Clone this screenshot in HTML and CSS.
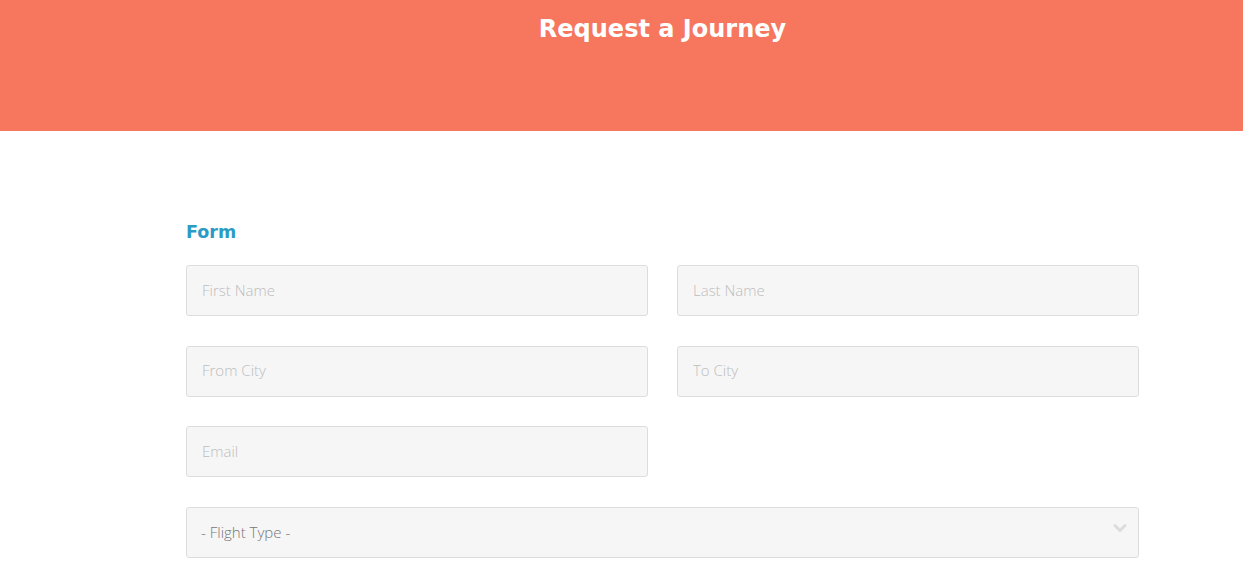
FILE: index.html
```html
<!DOCTYPE html>
<html lang="en">
<head>
<meta charset="utf-8">
<title>Request a Journey</title>
<link rel="stylesheet" href="styles.css">
</head>
<body>
<header class="hero">
  <div class="container">
    <h1 class="hero-title">Request a Journey</h1>
  </div>
</header>
<main class="content">
  <div class="container">
    <h2 class="form-title">Form</h2>
    <form class="form-grid">
      <input class="field" type="text" placeholder="First Name">
      <input class="field" type="text" placeholder="Last Name">
      <input class="field" type="text" placeholder="From City">
      <input class="field" type="text" placeholder="To City">
      <input class="field" type="email" placeholder="Email">
      <div class="spacer"></div>
      <div class="select-wrap">
        <select class="field select">
          <option>- Flight Type -</option>
        </select>
        <svg class="chevron" width="14" height="10" viewBox="0 0 14 10" aria-hidden="true">
          <path d="M2 2.5 L7 7.5 L12 2.5" fill="none" stroke="#dcdcdc" stroke-width="3" stroke-linecap="round" stroke-linejoin="round"/>
        </svg>
      </div>
    </form>
  </div>
</main>
</body>
</html>
```

FILE: styles.css
```css
html, body {
  margin: 0;
  padding: 0;
  background: #ffffff;
}

body {
  font-family: "Open Sans", "Liberation Sans", sans-serif;
}

.container {
  width: 953px;
  margin-left: 186px;
}

.hero {
  background: #f6765e;
  height: 131px;
  box-sizing: border-box;
  padding-top: 11px;
}

.hero-title {
  margin: 0;
  text-align: center;
  color: #ffffff;
  font-family: "DejaVu Sans", "Liberation Sans", sans-serif;
  font-weight: 700;
  font-size: 24px;
  line-height: 36px;
  letter-spacing: 0;
}

.content {
  padding-top: 88px;
}

.form-title {
  margin: 0 0 20px 0;
  color: #2a9bc4;
  font-family: "DejaVu Sans", "Liberation Sans", sans-serif;
  font-weight: 700;
  font-size: 17.5px;
  line-height: 26px;
}

.form-grid {
  display: grid;
  grid-template-columns: 462px 462px;
  column-gap: 29px;
  row-gap: 29.6px;
  margin: 0;
}

.field {
  box-sizing: border-box;
  width: 100%;
  height: 51px;
  margin: 0;
  padding: 0 15px 2px 15px;
  background: #f6f6f6;
  border: 1px solid #dddddd;
  border-radius: 3px;
  font-family: "Open Sans", sans-serif;
  font-weight: 300;
  font-size: 15px;
  color: #777777;
  outline: none;
}

.field::placeholder {
  color: #bdbdbd;
  opacity: 1;
}

.select-wrap {
  grid-column: 1 / span 2;
  position: relative;
}

.select {
  appearance: none;
  -webkit-appearance: none;
  color: #777777;
  padding-left: 14px;
  padding-bottom: 0;
}

.chevron {
  position: absolute;
  right: 12px;
  top: 16px;
}
```
